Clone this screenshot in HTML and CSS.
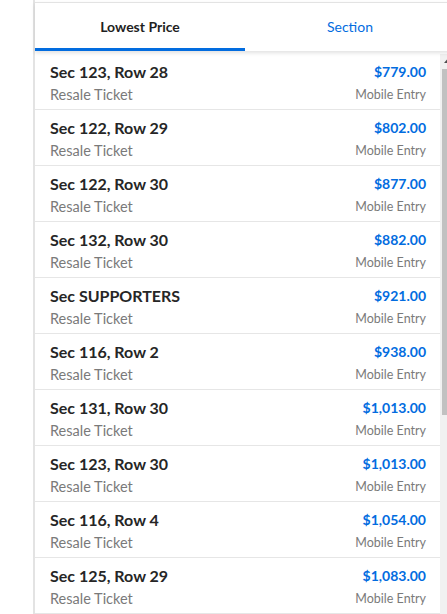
FILE: index.html
```html
<!DOCTYPE html>
<html>
<head>
<meta charset="utf-8">
<link rel="stylesheet" href="styles.css">
</head>
<body>
<div class="panel">
  <div class="tabs">
    <div class="tab active">Lowest Price</div>
    <div class="tab">Section</div>
  </div>
  <div class="body">
    <div class="list">
      <div class="row"><div class="l"><div class="t">Sec 123, Row 28</div><div class="s">Resale Ticket</div></div><div class="r"><div class="p">$779.00</div><div class="s">Mobile Entry</div></div></div>
      <div class="row"><div class="l"><div class="t">Sec 122, Row 29</div><div class="s">Resale Ticket</div></div><div class="r"><div class="p">$802.00</div><div class="s">Mobile Entry</div></div></div>
      <div class="row"><div class="l"><div class="t">Sec 122, Row 30</div><div class="s">Resale Ticket</div></div><div class="r"><div class="p">$877.00</div><div class="s">Mobile Entry</div></div></div>
      <div class="row"><div class="l"><div class="t">Sec 132, Row 30</div><div class="s">Resale Ticket</div></div><div class="r"><div class="p">$882.00</div><div class="s">Mobile Entry</div></div></div>
      <div class="row"><div class="l"><div class="t">Sec SUPPORTERS</div><div class="s">Resale Ticket</div></div><div class="r"><div class="p">$921.00</div><div class="s">Mobile Entry</div></div></div>
      <div class="row"><div class="l"><div class="t">Sec 116, Row 2</div><div class="s">Resale Ticket</div></div><div class="r"><div class="p">$938.00</div><div class="s">Mobile Entry</div></div></div>
      <div class="row"><div class="l"><div class="t">Sec 131, Row 30</div><div class="s">Resale Ticket</div></div><div class="r"><div class="p">$1,013.00</div><div class="s">Mobile Entry</div></div></div>
      <div class="row"><div class="l"><div class="t">Sec 123, Row 30</div><div class="s">Resale Ticket</div></div><div class="r"><div class="p">$1,013.00</div><div class="s">Mobile Entry</div></div></div>
      <div class="row"><div class="l"><div class="t">Sec 116, Row 4</div><div class="s">Resale Ticket</div></div><div class="r"><div class="p">$1,054.00</div><div class="s">Mobile Entry</div></div></div>
      <div class="row"><div class="l"><div class="t">Sec 125, Row 29</div><div class="s">Resale Ticket</div></div><div class="r"><div class="p">$1,083.00</div><div class="s">Mobile Entry</div></div></div>
    </div>
    <div class="scrollbar">
      <div class="arrow"><svg width="15" height="15" viewBox="0 0 15 15"><path d="M4 9 L7.5 5 L11 9 Z" fill="#505050"/></svg></div>
      <div class="thumb"></div>
    </div>
  </div>
</div>
</body>
</html>
```
FILE: styles.css
```css
html, body {
  margin: 0;
  padding: 0;
  background: #fff;
  overflow: hidden;
  height: 614px;
}
body {
  font-family: Lato, "Noto Sans", sans-serif;
  color: #262626;
}
.panel {
  margin-left: 33px;
  width: 422px;
  height: 614px;
  border-left: 2px solid #e3e3e3;
  display: flex;
  flex-direction: column;
  padding-top: 2px;
  box-sizing: border-box;
}
.tabs {
  display: flex;
  height: 48px;
  border-top: 1px solid #e3e3e3;
  box-shadow: 0 2px 4px rgba(0, 0, 0, 0.12);
  position: relative;
  z-index: 1;
  flex-shrink: 0;
}
.tab {
  flex: 1;
  display: flex;
  align-items: center;
  justify-content: center;
  font-size: 14px;
  color: #026cdf;
  border-bottom: 3px solid transparent;
  padding-top: 1px;
  box-sizing: border-box;
}
.tab.active {
  color: #1f1f1f;
  font-weight: 700;
  border-bottom-color: #026cdf;
}
.body {
  display: flex;
  flex: 1;
  min-height: 0;
  padding-top: 3px;
}
.list {
  flex: 1;
}
.row {
  display: flex;
  justify-content: space-between;
  height: 56px;
  border-bottom: 1px solid #e6e6e6;
  padding: 8px 14px 0 15px;
  box-sizing: border-box;
}
.l, .r {
  display: flex;
  flex-direction: column;
}
.r {
  align-items: flex-end;
}
.t {
  font-size: 16px;
  font-weight: 700;
  line-height: 20px;
}
.p {
  font-size: 14px;
  font-weight: 700;
  color: #026cdf;
  line-height: 20px;
}
.s {
  font-size: 14.5px;
  color: #7a7a7a;
  line-height: 18px;
  margin-top: 4px;
}
.r .s {
  font-size: 12.5px;
}
.scrollbar {
  width: 15px;
  background: #f1f1f1;
  display: flex;
  flex-direction: column;
  flex-shrink: 0;
}
.arrow {
  height: 15px;
}
.arrow svg {
  display: block;
}
.thumb {
  margin: 0 2px;
  height: 346px;
  background: #c1c1c1;
}
```
